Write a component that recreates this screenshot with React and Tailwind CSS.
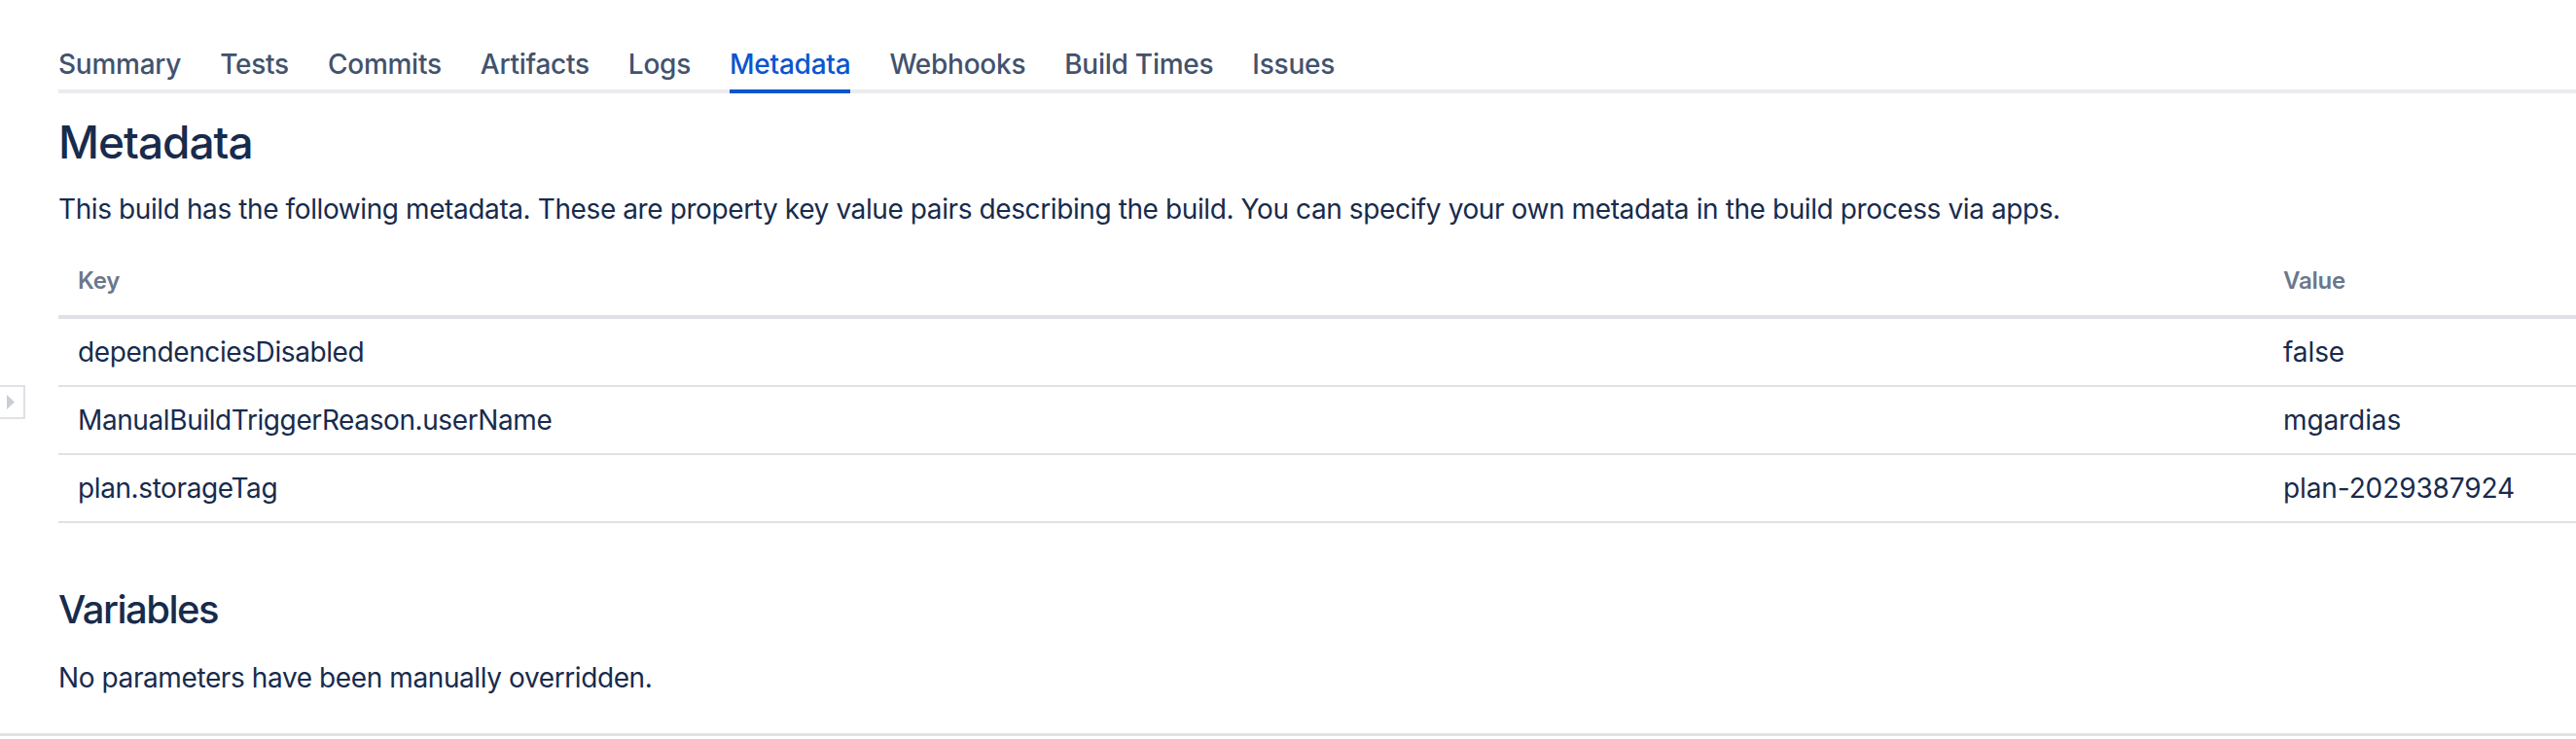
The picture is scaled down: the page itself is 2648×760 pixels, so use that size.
const tabs = ['Summary', 'Tests', 'Commits', 'Artifacts', 'Logs', 'Metadata', 'Webhooks', 'Build Times', 'Issues'];

const metadata = [
  { key: 'dependenciesDisabled', value: 'false' },
  { key: 'ManualBuildTriggerReason.userName', value: 'mgardias' },
  { key: 'plan.storageTag', value: 'plan-2029387924' },
];

function SidebarToggle() {
  return (
    <button
      type="button"
      className="absolute left-[-2px] top-[396px] w-[28px] h-[35px] border-2 border-[#dfe1e6] bg-white flex items-center justify-center"
    >
      <svg width="8" height="15" viewBox="0 0 8 15" className="ml-[-2px]">
        <path d="M0 0 L8 7.5 L0 15 Z" fill="#c9cdd4" />
      </svg>
    </button>
  );
}

export default function App() {
  const active = 'Metadata';

  return (
    <div
      className="relative w-full h-[760px] overflow-hidden bg-white text-[#172b4d]"
      style={{ fontFamily: 'Inter, "Liberation Sans", sans-serif' }}
    >
      <SidebarToggle />

      <div className="h-[757px] border-b-[3px] border-[#e1e2e6] pt-[46px]">
        {/* tabs */}
        <nav className="ml-[60px] flex gap-[40px] border-b-4 border-[#ebecf0]">
          {tabs.map((t) => (
            <a
              key={t}
              className={
                'pb-[6px] -mb-[4px] border-b-4 text-[28px] leading-[40px] tracking-[-0.25px] font-medium cursor-pointer ' +
                (t === active ? 'border-[#0c55cf] text-[#0c55cf]' : 'border-transparent text-[#42526e]')
              }
            >
              {t}
            </a>
          ))}
        </nav>

        <div className="pl-[60px]">
          <h1 className="mt-[22px] text-[46px] leading-[56px] tracking-[-1px] font-medium text-[#172b4d]">Metadata</h1>
          <p className="mt-[21px] text-[28px] leading-[40px] tracking-[-0.4px]">
            This build has the following metadata. These are property key value pairs describing the build. You can specify your own metadata in the build process via apps.
          </p>

          {/* metadata table */}
          <div className="mt-[24px]">
            <div className="grid grid-cols-[2267px_1fr] border-b-4 border-[#dfe1e6] text-[24px] leading-[32px] tracking-[-0.2px] font-semibold text-[#6b778c]">
              <div className="px-[20px] pt-[14px] pb-[19px]">Key</div>
              <div className="px-[20px] pt-[14px] pb-[19px]">Value</div>
            </div>
            {metadata.map((row) => (
              <div key={row.key} className="grid grid-cols-[2267px_1fr] border-b-2 border-[#dfe1e6] text-[28px] leading-[40px]">
                <div className="px-[20px] py-[14px] tracking-[-0.4px]">{row.key}</div>
                <div className="px-[20px] py-[14px] tracking-[-0.1px]">{row.value}</div>
              </div>
            ))}
          </div>

          <h2 className="mt-[65px] text-[40px] leading-[48px] tracking-[-1.5px] font-medium">Variables</h2>
          <p className="mt-[26px] text-[28px] leading-[40px] tracking-[-0.4px]">No parameters have been manually overridden.</p>
        </div>
      </div>
    </div>
  );
}
